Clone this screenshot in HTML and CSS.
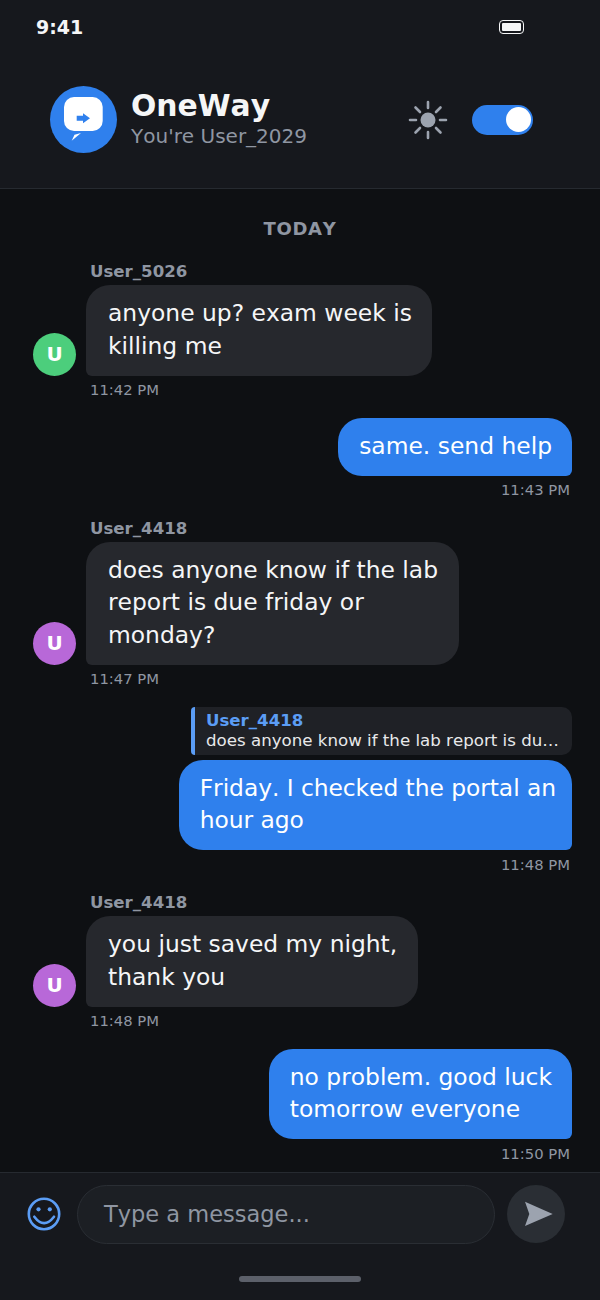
FILE: index.html
```html
<!DOCTYPE html>
<html lang="en">
<head>
    <meta charset="UTF-8">
    <meta name="viewport" content="width=device-width, initial-scale=1.0">
    <title>OneWay</title>
    <link rel="stylesheet" href="styles.css">
</head>
<body>
    <div class="app">
        <!-- Top bar -->
        <div class="top">
            <div class="status-bar">
                <span class="clock">9:41</span>
                <span class="battery"><span class="battery-fill"></span></span>
            </div>
            <header class="header">
                <div class="logo">
                    <svg width="67" height="67" viewBox="0 0 67 67">
                        <path d="M21.700 54.700 L31 47 L24.500 48.800 Z" fill="#fff"/>
                        <rect x="14" y="11" width="38.700" height="34" rx="10" fill="#fff"/>
                        <path d="M26.700 29.700 H33 V27.300 L40 32.200 L33 37.300 V34.700 H26.700 Z" fill="#2f80ed"/>
                    </svg>
                </div>
                <div class="brand">
                    <div class="brand-name">OneWay</div>
                    <div class="brand-user">You're User_2029</div>
                </div>
                <svg class="sun" width="40" height="40" viewBox="0 0 40 40">
                    <circle cx="20" cy="20" r="7.500" fill="#9ca3af"/>
                    <g stroke="#9ca3af" stroke-width="2.600" stroke-linecap="round">
                        <path d="M20 2V8M20 32V38M2 20H8M32 20H38M7.500 7.500L12 12M28 28L32.500 32.500M7.500 32.500L12 28M28 12L32.500 7.500"/>
                    </g>
                </svg>
                <div class="toggle"><span class="knob"></span></div>
            </header>
        </div>

        <!-- Messages -->
        <main class="chat">
            <div class="day">TODAY</div>

            <div class="msg">
                <div class="avatar green">U</div>
                <div class="msg-body">
                    <div class="sender">User_5026</div>
                    <div class="bubble">anyone up? exam week is<br>killing me</div>
                </div>
            </div>
            <div class="time">11:42 PM</div>

            <div class="msg mine">
                <div class="bubble">same. send help</div>
            </div>
            <div class="time mine">11:43 PM</div>

            <div class="msg">
                <div class="avatar purple">U</div>
                <div class="msg-body">
                    <div class="sender">User_4418</div>
                    <div class="bubble">does anyone know if the lab<br>report is due friday or<br>monday?</div>
                </div>
            </div>
            <div class="time">11:47 PM</div>

            <div class="msg mine">
                <div class="quote">
                    <div class="quote-name">User_4418</div>
                    <div class="quote-text">does anyone know if the lab report is du…</div>
                </div>
                <div class="bubble tight">Friday. I checked the portal an<br>hour ago</div>
            </div>
            <div class="time mine">11:48 PM</div>

            <div class="msg">
                <div class="avatar purple">U</div>
                <div class="msg-body">
                    <div class="sender">User_4418</div>
                    <div class="bubble">you just saved my night,<br>thank you</div>
                </div>
            </div>
            <div class="time">11:48 PM</div>

            <div class="msg mine">
                <div class="bubble">no problem. good luck<br>tomorrow everyone</div>
            </div>
            <div class="time mine">11:50 PM</div>
        </main>

        <!-- Input bar -->
        <footer class="footer">
            <div class="composer">
                <svg class="smile" width="36" height="36" viewBox="0 0 36 36" fill="none">
                    <circle cx="18" cy="18" r="15.200" stroke="#5b9df5" stroke-width="2.600"/>
                    <circle cx="12.500" cy="13.300" r="2.100" fill="#5b9df5"/>
                    <circle cx="23.800" cy="13.300" r="2.100" fill="#5b9df5"/>
                    <path d="M8.300 20.700Q18 33.500 28 20.700" stroke="#5b9df5" stroke-width="2.600" stroke-linecap="round"/>
                </svg>
                <div class="input">Type a message...</div>
                <div class="send">
                    <svg width="58" height="58" viewBox="0 0 58 58">
                        <path d="M18 16.700 L45.700 29 L18 41 L22.300 29 Z" fill="#9ca3af"/>
                    </svg>
                </div>
            </div>
            <div class="home-bar"></div>
        </footer>
    </div>
</body>
</html>
```

FILE: styles.css
```css
/* Page */
body {
    margin: 0;
    background-color: #0e1013;
    font-family: "DejaVu Sans", sans-serif;
    font-kerning: none;
}

.app {
    display: flex;
    flex-direction: column;
    width: 600px;
    height: 1300px;
    overflow: hidden;
}

/* Status bar and header */
.top {
    background-color: #16181d;
    border-bottom: 1px solid #262a30;
}

.status-bar {
    display: flex;
    justify-content: space-between;
    align-items: center;
    height: 52px;
    padding: 2px 76px 0 36px;
    box-sizing: border-box;
}

.clock {
    color: #f5f6f7;
    font-size: 19px;
    font-weight: bold;
}

.battery {
    display: flex;
    width: 25px;
    height: 14px;
    box-sizing: border-box;
    padding: 2px;
    border: 1.5px solid #f5f6f7;
    border-radius: 4px;
}

.battery-fill {
    flex: 1;
    background-color: #f5f6f7;
    border-radius: 1px;
}

.header {
    display: flex;
    align-items: center;
    height: 135px;
    padding: 0 67px 1px 50px;
}

.logo {
    width: 67px;
    height: 67px;
    border-radius: 50%;
    background-color: #2f80ed;
}

.logo svg {
    display: block;
}

.brand {
    flex: 1;
    margin-left: 14px;
}

.brand-name {
    color: #f5f6f7;
    font-size: 29.800px;
    font-weight: bold;
    line-height: 34px;
}

.brand-user {
    color: #8f96a2;
    font-size: 20px;
    line-height: 27px;
}

.sun {
    margin-right: 24px;
}

.toggle {
    display: flex;
    justify-content: flex-end;
    align-items: center;
    width: 61px;
    height: 30px;
    box-sizing: border-box;
    padding-right: 2px;
    background-color: #2f80ed;
    border-radius: 15px;
}

.knob {
    width: 25px;
    height: 25px;
    background-color: #fff;
    border-radius: 50%;
}

/* Messages */
.chat {
    flex: 1;
    display: flex;
    flex-direction: column;
    padding: 0 28px;
}

.day {
    margin: 28.500px 0 3px;
    color: #8f96a2;
    font-size: 18px;
    font-weight: bold;
    line-height: 22px;
    letter-spacing: 0.700px;
    text-align: center;
}

.msg {
    display: flex;
    align-items: flex-end;
    gap: 10px;
    margin-top: 19.500px;
}

.msg.mine {
    flex-direction: column;
    align-items: flex-end;
    gap: 5px;
    margin-top: 18.500px;
}

.msg-body {
    display: flex;
    flex-direction: column;
    align-items: flex-start;
}

.avatar {
    flex: none;
    width: 43px;
    height: 43px;
    margin-left: 5px;
    color: #fff;
    font-size: 20px;
    font-weight: bold;
    line-height: 43px;
    text-align: center;
    border-radius: 50%;
}

.green {
    background-color: #4cce7c;
}

.purple {
    background-color: #b868d8;
}

.sender {
    margin: 0 0 3px 4px;
    color: #8f96a2;
    font-size: 16.600px;
    font-weight: bold;
    line-height: 20px;
}

.bubble {
    padding: 12px 20.500px 13.500px 22px;
    color: #f5f6f7;
    background-color: #26282d;
    font-size: 23.400px;
    line-height: 32.500px;
    border-radius: 24px 24px 24px 6px;
}

.mine .bubble {
    padding-left: 21px;
    padding-right: 20px;
    color: #fff;
    background-color: #2f80ed;
    border-radius: 24px 24px 6px 24px;
}

.mine .bubble.tight {
    padding-right: 16px;
    letter-spacing: -0.060px;
}

.time {
    margin: 4.500px 0 0 62px;
    color: #8f96a2;
    font-size: 14.800px;
    line-height: 19px;
}

.time.mine {
    margin: 4.500px 2px 0 0;
    text-align: right;
}

/* Reply preview */
.quote {
    box-sizing: border-box;
    width: 381px;
    height: 48px;
    padding: 3px 0 0 11px;
    background-color: #1f2126;
    border-left: 4px solid #5b9df5;
    border-radius: 4px 10px 10px 4px;
}

.quote-name {
    color: #5b9df5;
    font-size: 16.600px;
    font-weight: bold;
    line-height: 21px;
}

.quote-text {
    color: #e8e9eb;
    font-size: 16.650px;
    line-height: 20px;
    white-space: nowrap;
}

/* Input bar */
.footer {
    height: 128px;
    box-sizing: border-box;
    background-color: #16181d;
    border-top: 1px solid #262a30;
}

.composer {
    display: flex;
    align-items: center;
    height: 82px;
    padding: 0 35px 0 26px;
}

.smile {
    margin-right: 15px;
}

.input {
    flex: 1;
    height: 59px;
    box-sizing: border-box;
    padding-left: 26px;
    color: #8f96a2;
    background-color: #1c1f24;
    font-size: 22.500px;
    line-height: 57px;
    border: 1px solid #2a2e34;
    border-radius: 30px;
}

.send {
    width: 58px;
    height: 58px;
    margin-left: 12px;
    background-color: #2a2e34;
    border-radius: 50%;
}

.send svg {
    display: block;
}

.home-bar {
    width: 122px;
    height: 6px;
    margin: 21px auto 0;
    background-color: #5c606a;
    border-radius: 3px;
}
```
